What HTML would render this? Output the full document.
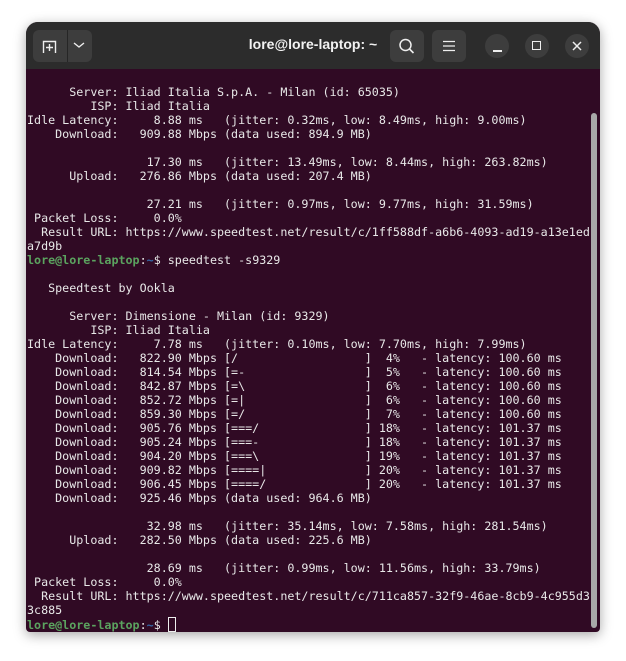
<!DOCTYPE html>
<html><head><meta charset="utf-8"><style>
html,body{margin:0;padding:0;background:#fff;width:626px;height:661px;overflow:hidden}
.win{position:absolute;left:26px;top:22px;width:574px;height:610px;border-radius:12px 12px 4px 4px;overflow:hidden;box-shadow:0 3px 12px rgba(0,0,0,.35);background:#300a24}
.tb{position:absolute;left:0;top:0;width:574px;height:47px;background:#2c2c2c}
.btn{position:absolute;background:#3d3d3d;border-radius:6px}
.circ{position:absolute;width:24px;height:24px;border-radius:12px;background:#3d3d3d;top:12px}
.title{position:absolute;left:0;width:574px;top:14px;text-align:center;color:#f2f2f2;font:bold 14px "Liberation Sans",sans-serif}
pre{position:absolute;left:1px;top:63px;margin:0;font:11.7px/14px "DejaVu Sans Mono",monospace;color:#e8e8e8;white-space:pre}
.g{color:#5ba35f;font-weight:bold}.b{color:#3465a4;font-weight:bold}
.sb{position:absolute;left:565px;top:91px;width:6px;height:515px;border-radius:3px;background:#a8a8a8}
.cur{display:inline-block;width:6px;height:13px;border:1px solid #eee;vertical-align:-3px}
</style></head><body>
<div class="win">
<div class="tb">
 <div class="btn" style="left:7px;top:8px;width:59px;height:32px"></div>
 <div style="position:absolute;left:41px;top:8px;width:1px;height:32px;background:#262626"></div>
 <svg style="position:absolute;left:15px;top:16px" width="18" height="16" viewBox="0 0 18 16"><path d="M2.5 15V3.5h12V15M8.5 6v7M5 9.5h7" stroke="#eee" stroke-width="1.4" fill="none"/></svg>
 <svg style="position:absolute;left:46px;top:18px" width="14" height="10" viewBox="0 0 14 10"><path d="M2 3l5 4 5-4" stroke="#eee" stroke-width="1.4" fill="none"/></svg>
 <div class="title">lore@lore-laptop: ~</div>
 <div class="btn" style="left:364px;top:8px;width:34px;height:32px"></div>
 <svg style="position:absolute;left:371px;top:15px" width="20" height="20" viewBox="0 0 20 20"><circle cx="8.5" cy="8" r="5.5" stroke="#eee" stroke-width="1.5" fill="none"/><path d="M12.5 12l4 4" stroke="#eee" stroke-width="1.6"/></svg>
 <div class="btn" style="left:406px;top:8px;width:34px;height:32px"></div>
 <svg style="position:absolute;left:416px;top:17px" width="14" height="14" viewBox="0 0 14 14"><path d="M1 2.5h12M1 7h12M1 11.5h12" stroke="#eee" stroke-width="1.3"/></svg>
 <div class="circ" style="left:459px"></div>
 <div style="position:absolute;left:467px;top:28px;width:9px;height:1.5px;background:#eee"></div>
 <div class="circ" style="left:499px"></div>
 <div style="position:absolute;left:506px;top:19px;width:7px;height:7px;border:1.5px solid #eee"></div>
 <div class="circ" style="left:539px"></div>
 <svg style="position:absolute;left:546px;top:19px" width="10" height="10" viewBox="0 0 10 10"><path d="M1 1l8 8M9 1l-8 8" stroke="#eee" stroke-width="1.5"/></svg>
</div>
<div class="sb"></div>
<pre>      Server: Iliad Italia S.p.A. - Milan (id: 65035)
         ISP: Iliad Italia
Idle Latency:     8.88 ms   (jitter: 0.32ms, low: 8.49ms, high: 9.00ms)
    Download:   909.88 Mbps (data used: 894.9 MB)

                 17.30 ms   (jitter: 13.49ms, low: 8.44ms, high: 263.82ms)
      Upload:   276.86 Mbps (data used: 207.4 MB)

                 27.21 ms   (jitter: 0.97ms, low: 9.77ms, high: 31.59ms)
 Packet Loss:     0.0%
  Result URL: https://www.speedtest.net/result/c/1ff588df-a6b6-4093-ad19-a13e1ed
a7d9b
<span class="g">lore@lore-laptop</span>:<span class="b">~</span>$ speedtest -s9329

   Speedtest by Ookla

      Server: Dimensione - Milan (id: 9329)
         ISP: Iliad Italia
Idle Latency:     7.78 ms   (jitter: 0.10ms, low: 7.70ms, high: 7.99ms)
    Download:   822.90 Mbps [/                  ]  4%   - latency: 100.60 ms
    Download:   814.54 Mbps [=-                 ]  5%   - latency: 100.60 ms
    Download:   842.87 Mbps [=\                 ]  6%   - latency: 100.60 ms
    Download:   852.72 Mbps [=|                 ]  6%   - latency: 100.60 ms
    Download:   859.30 Mbps [=/                 ]  7%   - latency: 100.60 ms
    Download:   905.76 Mbps [===/               ] 18%   - latency: 101.37 ms
    Download:   905.24 Mbps [===-               ] 18%   - latency: 101.37 ms
    Download:   904.20 Mbps [===\               ] 19%   - latency: 101.37 ms
    Download:   909.82 Mbps [====|              ] 20%   - latency: 101.37 ms
    Download:   906.45 Mbps [====/              ] 20%   - latency: 101.37 ms
    Download:   925.46 Mbps (data used: 964.6 MB)

                 32.98 ms   (jitter: 35.14ms, low: 7.58ms, high: 281.54ms)
      Upload:   282.50 Mbps (data used: 225.6 MB)

                 28.69 ms   (jitter: 0.99ms, low: 11.56ms, high: 33.79ms)
 Packet Loss:     0.0%
  Result URL: https://www.speedtest.net/result/c/711ca857-32f9-46ae-8cb9-4c955d3
3c885
<span class="g">lore@lore-laptop</span>:<span class="b">~</span>$ <span class="cur"></span></pre>
</div>
</body></html>
